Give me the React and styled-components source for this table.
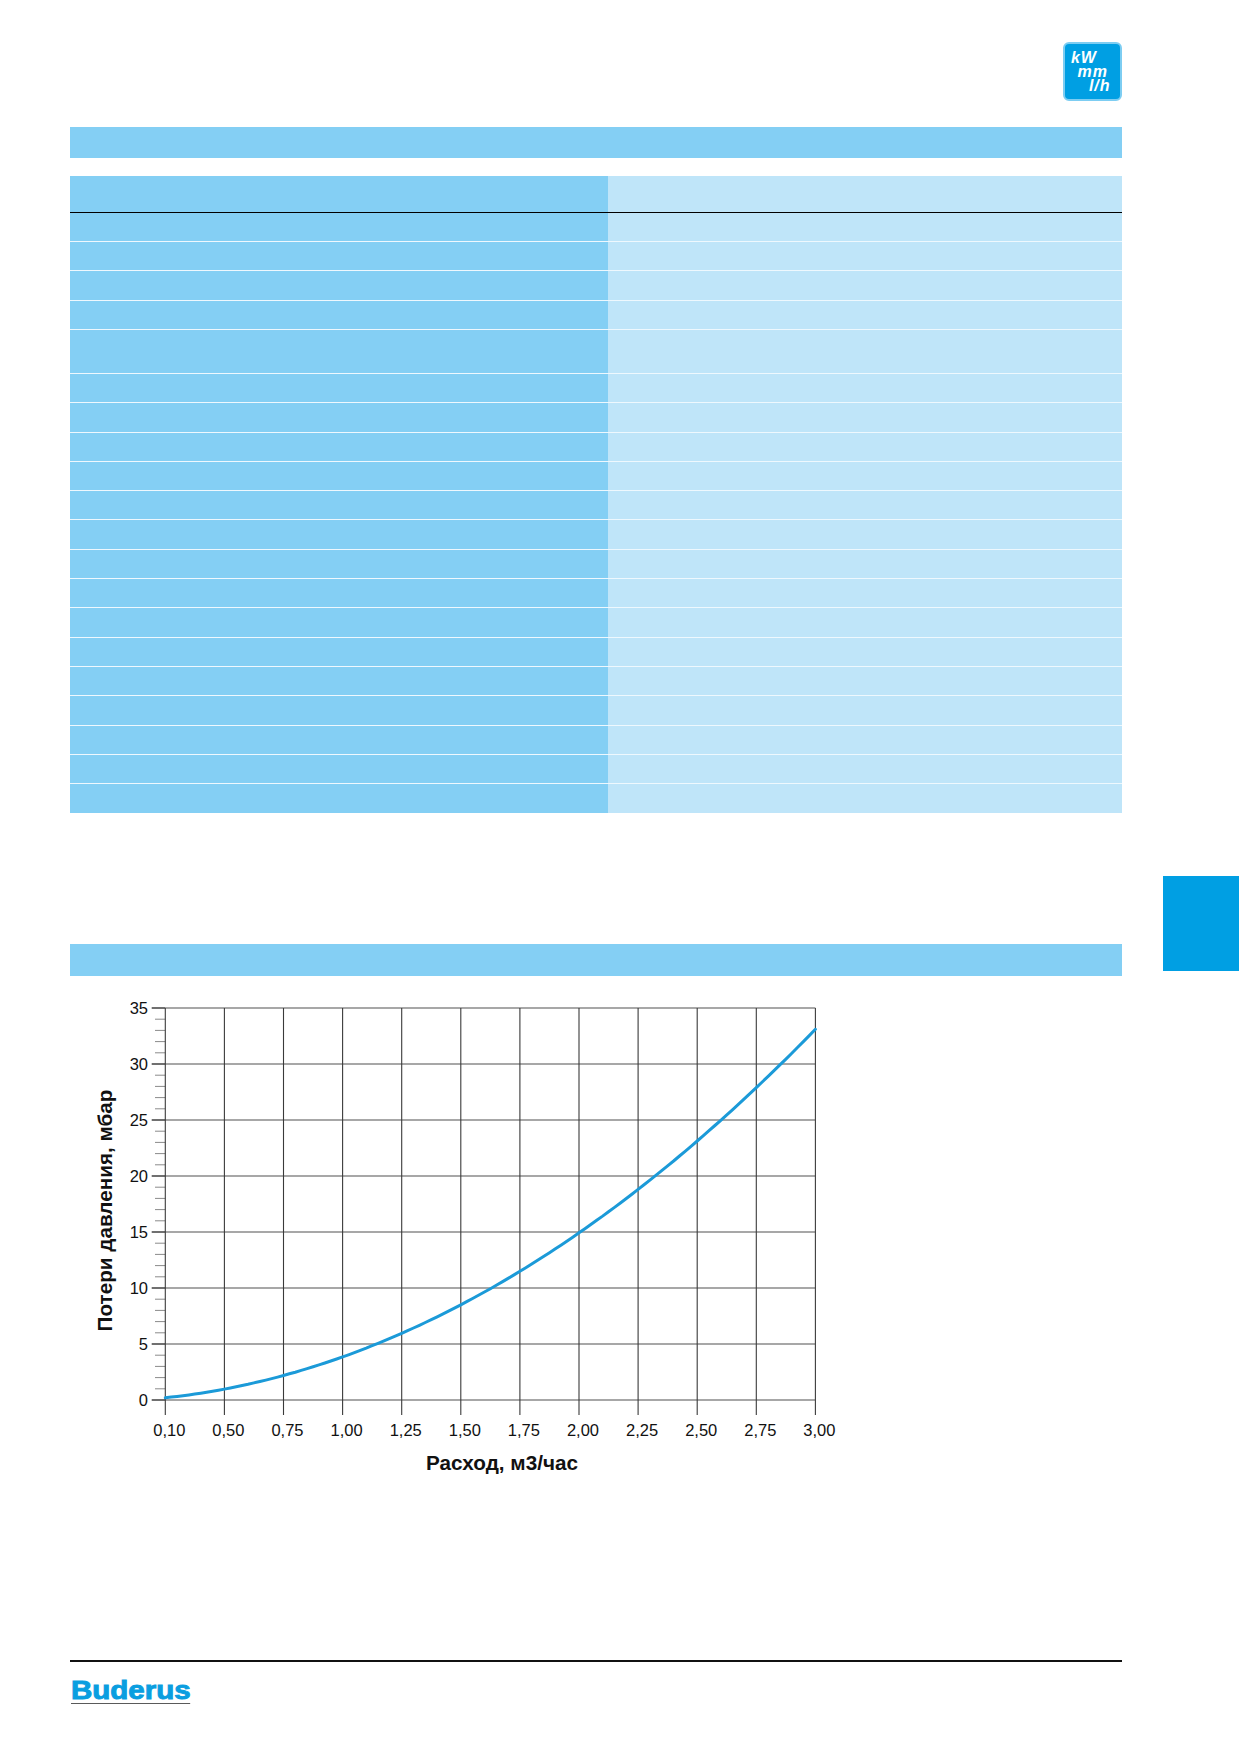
import React from 'react'
import styled, { createGlobalStyle } from 'styled-components'

const GlobalStyle = createGlobalStyle`
  html, body {
    margin: 0;
    padding: 0;
    background: #fff;
  }
  body {
    font-family: "Liberation Sans", Arial, sans-serif;
  }
`

const BLUE = '#009fe3'
const MID = '#84cff4'
const LIGHT = '#bfe5f9'

// chart geometry (svg coords)
const X0 = 95.3
const STEP_X = 59.1
const Y0 = 424
const PER_UNIT = 11.2
const xLabels = ['0,10', '0,50', '0,75', '1,00', '1,25', '1,50', '1,75', '2,00', '2,25', '2,50', '2,75', '3,00']
const yMajors = [0, 5, 10, 15, 20, 25, 30, 35]
const X1 = X0 + STEP_X * (xLabels.length - 1)
const yAt = (v) => Y0 - v * PER_UNIT

const curvePoints = () => {
  const pts = []
  for (let i = 0; i <= 110; i++) {
    const t = i / 10
    const v = 0.2218 * t * t + 0.551 * t + 0.2
    pts.push(`${(X0 + t * STEP_X).toFixed(1)},${yAt(v).toFixed(1)}`)
  }
  return pts.join(' ')
}

const rows = Array.from({ length: 20 }, (_, i) => ({ id: i, tall: i === 4 }))

const App = () => (
  <>
    <GlobalStyle />
    <Page>
      <Content>
        <Header>
          <UnitBadge>
            <BadgeLine indent={0}>kW</BadgeLine>
            <BadgeLine indent={6.5}>mm</BadgeLine>
            <BadgeLine indent={18}>l/h</BadgeLine>
          </UnitBadge>
        </Header>

        <SectionBar top={26} />

        <DataTable>
          <TableHead>
            <Cell />
            <Cell light />
          </TableHead>
          {rows.map(row => (
            <TableRow key={row.id} tall={row.tall}>
              <Cell />
              <Cell light />
            </TableRow>
          ))}
        </DataTable>

        <SectionBar top={130.6} />

        <ChartSvg width="800" height="524" viewBox="0 0 800 524">
          {/* horizontal grid + y ticks */}
          {Array.from({ length: 36 }, (_, v) => {
            const y = yAt(v)
            const major = v % 5 === 0
            return (
              <g key={`h${v}`}>
                {major && <line x1={X0} x2={X1} y1={y} y2={y} stroke="#8a8a8a" strokeWidth="1.3" />}
                <line
                  x1={major ? 81.7 : 85}
                  x2={X0}
                  y1={y}
                  y2={y}
                  stroke={major ? '#333' : '#8a8a8a'}
                  strokeWidth={major ? 1.4 : 1}
                />
              </g>
            )
          })}
          {yMajors.map(v => (
            <TickText key={`yl${v}`} x="78" y={yAt(v) + 5.8} textAnchor="end">{v}</TickText>
          ))}

          {/* vertical grid + x ticks */}
          {xLabels.map((label, i) => {
            const x = X0 + i * STEP_X
            return (
              <g key={label}>
                <line x1={x} x2={x} y1={yAt(35)} y2={Y0 + 15} stroke="#3a3a3a" strokeWidth="1.1" />
                <TickText x={x + 4} y="459.5" textAnchor="middle">{label}</TickText>
              </g>
            )
          })}

          <polyline points={curvePoints()} fill="none" stroke="#1b9ad8" strokeWidth="3" strokeLinejoin="round" strokeLinecap="round" />

          <AxisTitle x="432" y="494" textAnchor="middle">Расход, м3/час</AxisTitle>
          <AxisTitle transform="translate(41.5,234.5) rotate(-90)" textAnchor="middle">Потери давления, мбар</AxisTitle>
        </ChartSvg>

        <FooterRule />
        <Logo>Buderus</Logo>
      </Content>

      <SideColumn>
        <ThumbTab />
      </SideColumn>
    </Page>
  </>
)

const Page = styled.div`
  width: 1239px;
  height: 1752px;
  box-sizing: border-box;
  padding-left: 70px;
  display: grid;
  grid-template-columns: 1052px 76.3px;
  column-gap: 40.7px;
  overflow: hidden;
`

const Content = styled.div`
  display: flex;
  flex-direction: column;
`

const Header = styled.div`
  display: flex;
  justify-content: flex-end;
  margin-top: 41.7px;
  padding-right: 0.3px;
`

const UnitBadge = styled.div`
  width: 59px;
  height: 59px;
  box-sizing: border-box;
  border: 2px solid #7dcdf2;
  border-radius: 6px;
  background: ${BLUE};
  padding: 7px 0 0 6.3px;
  color: #fff;
`

const BadgeLine = styled.div`
  font-family: "Liberation Sans", Arial, sans-serif;
  font-style: italic;
  font-weight: bold;
  font-size: 16px;
  line-height: 14.3px;
  letter-spacing: 0.9px;
  white-space: nowrap;
  margin-left: ${p => p.indent}px;
`

const SectionBar = styled.div`
  margin-top: ${p => p.top}px;
  height: 31.8px;
  background: ${MID};
`

const DataTable = styled.div`
  margin-top: 18px;
  display: flex;
  flex-direction: column;
`

const TableHead = styled.div`
  display: grid;
  grid-template-columns: 537.7px 1fr;
  height: 36.3px;
  box-sizing: border-box;
  border-bottom: 1.5px solid #000;
`

const TableRow = styled.div`
  display: grid;
  grid-template-columns: 537.7px 1fr;
  height: ${p => (p.tall ? 44 : 29.3)}px;
  box-sizing: border-box;
  border-bottom: 1.4px solid #eef8fe;
  &:last-child {
    border-bottom: none;
  }
`

const Cell = styled.div`
  background: ${p => (p.light ? LIGHT : MID)};
`

const ChartSvg = styled.svg`
  display: block;
  margin-left: 0;
`

const TickText = styled.text`
  font-family: "Liberation Sans", Arial, sans-serif;
  font-size: 16.5px;
  fill: #111;
`

const AxisTitle = styled.text`
  font-family: "Liberation Sans", Arial, sans-serif;
  font-size: 20.7px;
  font-weight: bold;
  fill: #111;
`

const FooterRule = styled.div`
  margin-top: 160.3px;
  height: 1.5px;
  background: #111;
`

const Logo = styled.div`
  align-self: flex-start;
  margin-top: 16.4px;
  margin-left: 1px;
  font-family: "Liberation Sans", Arial, sans-serif;
  font-weight: bold;
  font-size: 25px;
  line-height: 25px;
  color: #0a9ee0;
  -webkit-text-stroke: 0.9px #0a9ee0;
  border-bottom: 1.5px solid #5a5a5a;
  transform: scaleX(1.18);
  transform-origin: left center;
`

const SideColumn = styled.div`
  display: flex;
  flex-direction: column;
`

const ThumbTab = styled.div`
  margin-top: 876px;
  height: 94.7px;
  background: ${BLUE};
`

export default App
